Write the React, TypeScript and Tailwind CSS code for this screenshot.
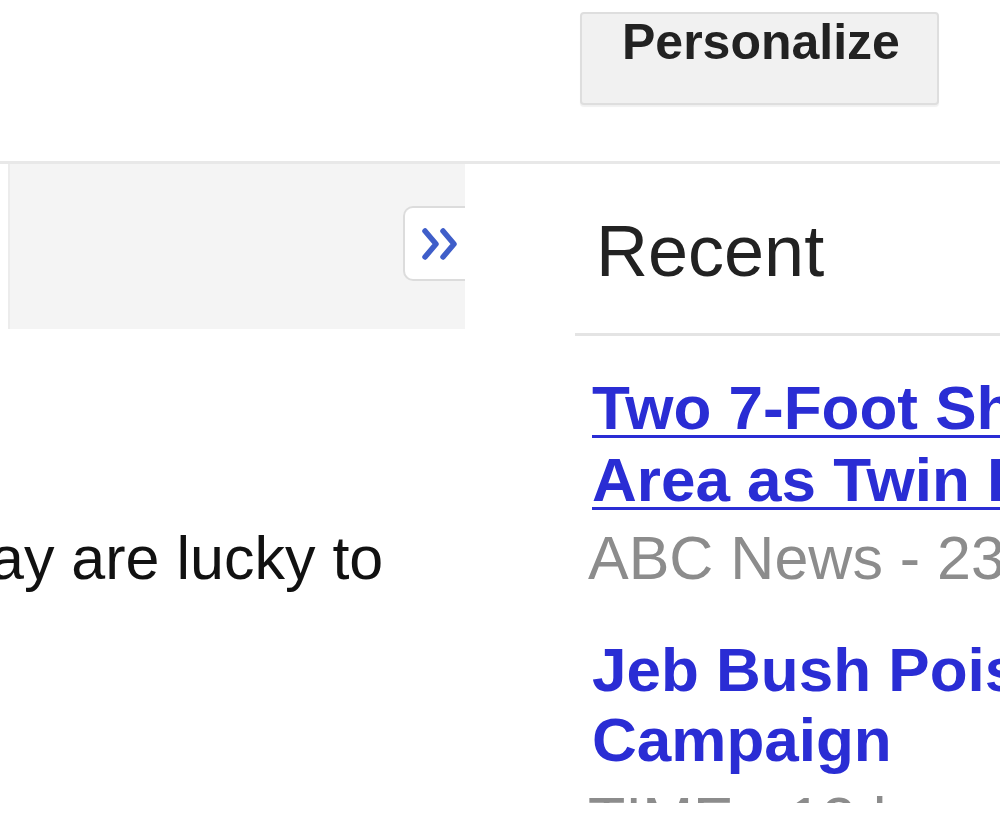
import React from "react";

const font = { fontFamily: '"Liberation Sans", Arial, Helvetica, sans-serif' };

export default function App() {
  return (
    <div
      className="w-[1000px] h-[816px] overflow-hidden bg-white"
      style={font}
    >
      {/* header with Personalize button */}
      <div className="h-[161px] pt-[12px] pl-[580px]">
        <button className="w-[359px] h-[93px] bg-[#f1f1f1] border-2 border-[#dedede] rounded-[4px] pl-[40px] pt-[3px] flex items-start text-left font-bold text-[50px] leading-none text-[#222] shadow-[0_2px_1px_rgba(0,0,0,0.06)]">
          Personalize
        </button>
      </div>

      {/* main row */}
      <div className="flex border-t-[3px] border-[#e8e8e8]">
        {/* left column */}
        <div className="w-[465px] shrink-0 flex flex-col">
          <div className="ml-[8px] h-[165px] bg-[#f4f4f4] border-l-2 border-[#ececec]" />
          <div className="mt-[193px] -ml-[10px] whitespace-nowrap text-[61px] leading-[72px] text-[#111]">
            ay are lucky to
          </div>
        </div>

        {/* right column */}
        <div className="relative flex-1 pl-[110px] pt-[51px]">
          {/* collapse tab */}
          <div className="absolute left-[-62px] top-[42px] w-[62px] h-[75px] bg-white border-2 border-r-0 border-[#dcdcdc] rounded-l-[10px] flex items-center pl-[16px]">
            <svg width="40" height="34" viewBox="0 0 40 34" fill="none">
              <path
                d="M4 4 L15 17 L4 30"
                stroke="#3f5ec9"
                strokeWidth="5.5"
                strokeLinecap="round"
                strokeLinejoin="round"
              />
              <path
                d="M22 4 L33 17 L22 30"
                stroke="#3f5ec9"
                strokeWidth="5.5"
                strokeLinecap="round"
                strokeLinejoin="round"
              />
            </svg>
          </div>

          <div className="ml-[21px] text-[72px] leading-none text-[#222] h-[72px]">
            Recent
          </div>
          <div className="mt-[46px] h-[3px] bg-[#e4e4e4] w-[600px]" />

          <div className="ml-[12px] w-[900px] h-[467px] overflow-hidden">
            <a className="block mt-[36px] ml-[5px] whitespace-nowrap font-bold text-[62px] leading-[72px] text-[#2a2dd4] underline decoration-[3px] underline-offset-[6px]">
              Two 7-Foot Sharks Spotted in Same
              <br />
              Area as Twin Brothers Attacked
            </a>
            <div className="mt-[6px] ml-[1px] whitespace-nowrap text-[61px] leading-[72px] text-[#8c8c8c]">
              ABC News - 23 minutes ago
            </div>

            <a className="block mt-[41px] ml-[5px] whitespace-nowrap font-bold text-[62px] leading-[70px] text-[#2a2dd4]">
              Jeb Bush Poised to Launch Presidential
              <br />
              Campaign
            </a>
            <div className="mt-[8px] ml-[1px] whitespace-nowrap text-[61px] leading-[72px] text-[#8c8c8c]">
              TIME - 12 hours ago
            </div>
          </div>
        </div>
      </div>
    </div>
  );
}
